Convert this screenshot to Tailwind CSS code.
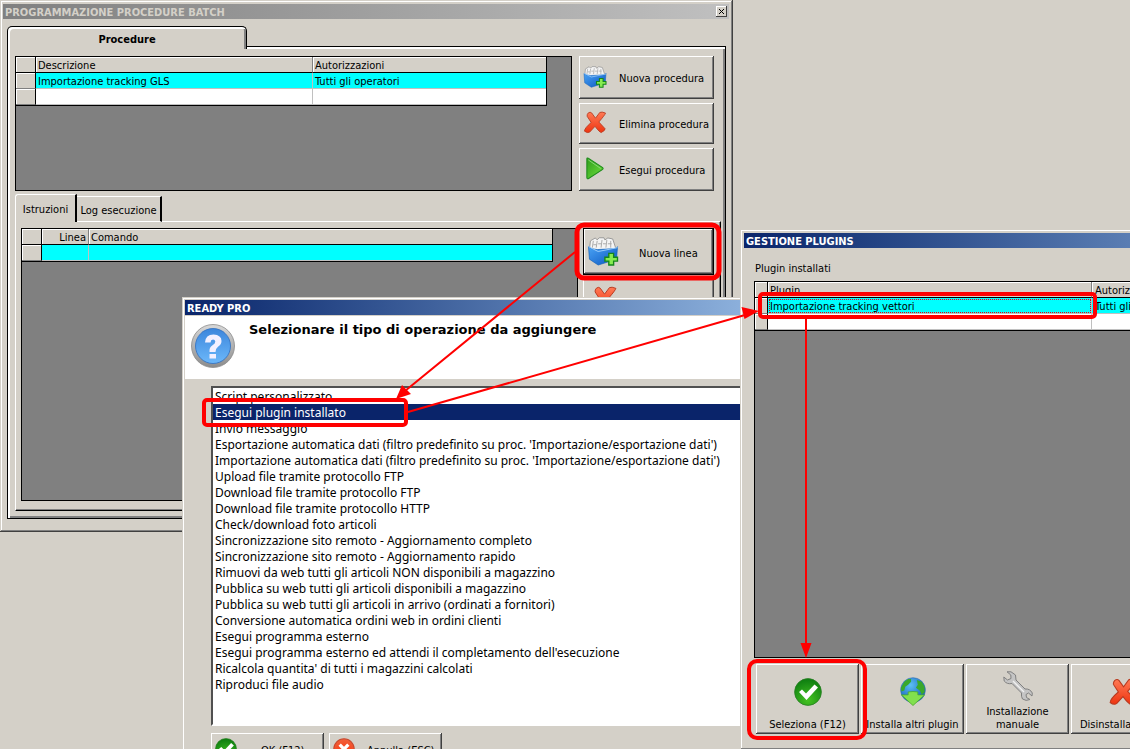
<!DOCTYPE html>
<html lang="it">
<head>
<meta charset="utf-8">
<title>Programmazione procedure batch</title>
<script src="https://cdn.jsdelivr.net/npm/@tailwindcss/browser@4"></script>
</head>
<body>
<main class="relative h-screen w-full overflow-hidden bg-[#d4d0c8] font-['DejaVu_Sans_Condensed','Noto_Sans',sans-serif] text-[11px] leading-[15px] text-black">

<svg class="absolute size-0" aria-hidden="true">
  <defs>
    <linearGradient id="gBlue" x1="0" y1="0" x2="1" y2="1"><stop offset="0" stop-color="#4aa3f5"/><stop offset="1" stop-color="#0a55c0"/></linearGradient>
    <linearGradient id="gRed" x1="0" y1="0" x2="0" y2="1"><stop offset="0" stop-color="#ff7a55"/><stop offset="1" stop-color="#ee3410"/></linearGradient>
    <linearGradient id="gGreen" x1="0" y1="0" x2="1" y2="1"><stop offset="0" stop-color="#2f9e1c"/><stop offset="1" stop-color="#6fe03c"/></linearGradient>
    <linearGradient id="gRing" x1="0" y1="0" x2="0" y2="1"><stop offset="0" stop-color="#d8d8d8"/><stop offset="1" stop-color="#8c8c8c"/></linearGradient>
    <linearGradient id="gAsk" x1="0" y1="0" x2="0" y2="1"><stop offset="0" stop-color="#3c86dc"/><stop offset="1" stop-color="#6cb8fa"/></linearGradient>
    <radialGradient id="gOk" cx=".5" cy=".8" r=".8"><stop offset="0" stop-color="#45c322"/><stop offset="1" stop-color="#0c7c10"/></radialGradient>
    <radialGradient id="gNo" cx=".5" cy=".9" r=".9"><stop offset="0" stop-color="#ff2c00"/><stop offset="1" stop-color="#f0603c"/></radialGradient>
    <radialGradient id="gSea" cx=".4" cy=".3" r=".8"><stop offset="0" stop-color="#5cc0f5"/><stop offset="1" stop-color="#0a50b0"/></radialGradient>
  </defs>
  <symbol id="i-box" viewBox="0 0 32 30">
    <path d="M2 13 3 4 8 1 10 3 12 .8 17 .8 18 3 21 1 26 2 29 11 27 15 4 15Z" fill="#f4f4f4" stroke="#909090" stroke-width=".9"/>
    <path d="M5 11 6 4M9 11 10 4M14 11 15 3M19 11 20 3M24 11 24 4M6 8h3M11 7h3M16 7h3M21 7h4" stroke="#a8a8a8" fill="none"/>
    <path d="M1 10 4 12 10 13 29 12 31 10 30 23 11 29 2 23Z" fill="url(#gBlue)" stroke="#1160b8" stroke-width=".7"/>
    <path d="M1 10 11 15 31 11" fill="none" stroke="#9ccdfb"/>
    <path d="M22 17h5v4h4v4h-4v4h-5v-4h-4v-4h4z" fill="#86ec50" stroke="#15851a" stroke-width="1.400"/>
  </symbol>
  <symbol id="i-x" viewBox="0 0 24 24">
    <path d="M5 2Q7 .5 8.500 2L12.500 7.500 17 1.500Q19 .4 23 2.200 22.500 4 16 11.500L22.500 18.500Q23 20 18.500 22.500 17 22.500 12 16L6.500 22Q4 23.500 1 21 1 18 8 12L3.800 5.500Q3.500 3.500 5 2Z" fill="url(#gRed)" stroke="#b83a20" stroke-width=".9"/>
  </symbol>
  <symbol id="i-play" viewBox="0 0 20 24">
    <path d="M1.500 2Q1.500 .6 3 1.200L18 11Q19 12 18 13L3 22.600Q1.500 23 1.500 21.500Z" fill="url(#gGreen)" stroke="#1e8a1c" stroke-width="1.100"/>
    <path d="M3 3 16 12" stroke="#8ad878" fill="none"/>
  </symbol>
  <symbol id="i-ok" viewBox="0 0 28 28">
    <circle cx="14" cy="14" r="13.400" fill="url(#gOk)" stroke="#2a7f24" stroke-width=".8"/>
    <path d="M5 14 8 11.500 12 15.500 20.500 6.500 24 9.500 12.500 22Z" fill="#fff"/>
  </symbol>
  <symbol id="i-no" viewBox="0 0 28 28">
    <circle cx="14" cy="14" r="13" fill="url(#gNo)" stroke="#c84a30" stroke-width="1.400"/>
    <path d="M7 10 10 7 14 11 18 7 21 10 17 14 21 18 18 21 14 17 10 21 7 18 11 14Z" fill="#fff"/>
  </symbol>
  <symbol id="i-globe" viewBox="0 0 28 30">
    <circle cx="14" cy="13.500" r="12.800" fill="url(#gSea)" stroke="#2a6ab0" stroke-width=".6"/>
    <path d="M5 5 9 2 12 2 12 5 9 8 6 10 5 14 2 15 1.500 11ZM18 3 23 5 26 10 26 16 23 18 21 14 17 11 19 8Z" fill="#3aa82c"/>
    <path d="M9 15.500Q14 14.500 19 15.500L19 18.500 26 18.500 14 29.500 2 18.500 9 18.500Z" fill="#82e04e" stroke="#48a828" stroke-width=".8"/>
  </symbol>
  <symbol id="i-wrench" viewBox="0 0 30 30">
    <path d="M4 .8 8 .8 12.500 4 13 9 22 18Q27 17.500 29.300 22L29 25 25.500 22 23 23.500 23.500 26.500 27 28.500Q23 30.500 19.500 28 18 25.500 18.500 22L9 12.500Q4 13.500 1.200 10L.8 6 4.500 9 8 7.500 7.800 4Z" fill="#c4c4c4" stroke="#808080"/>
    <path d="M10 10 21 21" stroke="#f0f0f0" stroke-width="1.500"/>
  </symbol>
  <symbol id="i-ask" viewBox="0 0 44 44">
    <circle cx="22" cy="22" r="21.500" fill="url(#gRing)" stroke="#8a8a8a" stroke-width=".8"/>
    <circle cx="22" cy="22" r="17.500" fill="url(#gAsk)" stroke="#2f6fc0" stroke-width=".8"/>
    <path d="M14 18.500Q14.500 10.500 22.500 10.500 30.500 11 30.500 17 30.500 20.500 27 22.700 24.500 24.500 24.500 28L18.500 28Q18 23.500 21.500 21.300 24.500 19.500 24.300 17.500 24 15.500 22 15.500 19.700 15.700 19.500 18.500ZM18.500 30H25V34.500H18.500Z" fill="#f3f0ff"/>
  </symbol>
</svg>

<!-- Batch procedure window -->
<section class="absolute left-0 top-0 w-[733px] bg-[#d4d0c8] px-[3px] pt-1 pb-[13px] shadow-[inset_-1px_-1px_#404040,inset_1px_1px_#d4d0c8,inset_-2px_-2px_#808080,inset_2px_2px_#fff]">
  <header class="mr-px flex h-[15px] items-center justify-between bg-linear-to-r from-[#808080] to-[#c0c0c0] px-0.5">
    <h1 class="pt-0.5 font-bold text-[#d4d0c8]">PROGRAMMAZIONE PROCEDURE BATCH</h1>
    <button type="button" aria-label="Chiudi" class="grid size-[11px] place-items-center bg-[#d4d0c8] shadow-[inset_-1px_-1px_#404040,inset_1px_1px_#fff]">
      <svg class="size-[7px]" viewBox="0 0 7 7"><path d="M1 1 6 6M6 1 1 6" stroke="#000"/></svg>
    </button>
  </header>
  <div class="mx-1 mt-[7px]">
    <button type="button" class="relative z-10 -mb-[3px] flex h-[23px] w-60 items-center justify-center rounded-t-[5px] border border-b-0 border-black bg-[#d4d0c8] pt-0.5 font-bold shadow-[inset_2px_2px_#fff,inset_-2px_0_#808080]">Procedure</button>
    <div class="border border-black pt-[9px] pb-[7px] pl-[7px] pr-[3px] shadow-[inset_2px_2px_#fff,inset_-2px_-2px_#808080]">
      <div class="flex gap-[7px] pr-2">
        <div class="h-[135px] flex-1 border border-black bg-[#808080]">
          <table class="w-[531px] table-fixed border-separate border-spacing-0 border-r border-b border-black text-left leading-[13px] [&_td]:pt-0.5 [&_th]:pt-0.5">
            <colgroup><col class="w-5"><col class="w-[277px]"><col></colgroup>
            <thead><tr class="h-4 bg-[#d4d0c8]">
              <th class="border-r border-b border-black p-0 shadow-[inset_1px_1px_#fff]"></th>
              <th class="border-r border-b border-r-[#808080] border-b-black p-0 pl-0.5 font-normal shadow-[inset_1px_1px_#fff]">Descrizione</th>
              <th class="border-b border-black p-0 pl-0.5 font-normal shadow-[inset_1px_1px_#fff]">Autorizzazioni</th>
            </tr></thead>
            <tbody>
              <tr class="h-4 bg-[#00ffff]">
                <td class="border-r border-b border-r-black border-b-[#808080] bg-[#d4d0c8] p-0 shadow-[inset_1px_1px_#fff]"></td>
                <td class="border-r border-b border-[#c0c0c0] p-0 pl-0.5">Importazione tracking GLS</td>
                <td class="border-b border-[#c0c0c0] p-0 pl-0.5">Tutti gli operatori</td>
              </tr>
              <tr class="h-4 bg-white">
                <td class="border-r border-b border-r-black border-b-[#808080] bg-[#d4d0c8] p-0 shadow-[inset_1px_1px_#fff]"></td>
                <td class="border-r border-b border-[#c0c0c0] p-0"></td>
                <td class="border-b border-[#c0c0c0] p-0"></td>
              </tr>
            </tbody>
          </table>
        </div>
        <div class="flex w-[135px] flex-col gap-1">
          <button type="button" class="flex h-[43px] items-center gap-3 pt-0.5 pl-1 shadow-[inset_-1px_-1px_#404040,inset_1px_1px_#fff,inset_-2px_-2px_#808080]"><svg class="mb-1 h-[22px] w-6"><use href="#i-box"/></svg>Nuova procedura</button>
          <button type="button" class="flex h-[41px] items-center gap-3 pt-0.5 pl-1 shadow-[inset_-1px_-1px_#404040,inset_1px_1px_#fff,inset_-2px_-2px_#808080]"><svg class="mb-1 h-[23px] w-6"><use href="#i-x"/></svg>Elimina procedura</button>
          <button type="button" class="flex h-[43px] items-center gap-3 pt-0.5 pl-1 shadow-[inset_-1px_-1px_#404040,inset_1px_1px_#fff,inset_-2px_-2px_#808080]"><svg class="mb-1 h-[23px] w-6"><use href="#i-play"/></svg>Esegui procedura</button>
        </div>
      </div>
      <div class="relative z-10 mt-[3px] -mb-px flex items-end">
        <button type="button" class="flex h-7 w-[62px] items-center justify-center rounded-tl-[3px] border-t border-r-2 border-l border-t-white border-r-black border-l-white bg-[#d4d0c8] pt-0.5">Istruzioni</button>
        <button type="button" class="flex h-[26px] w-[85px] items-center justify-center border-t border-r-2 border-b border-t-white border-r-black border-b-white pt-0.5">Log esecuzione</button>
      </div>
      <div class="mr-px border-t border-r border-b border-l border-t-white border-r-black border-b-black border-l-white pt-[6px] pb-[9px] pl-[5px] shadow-[inset_-1px_-1px_#808080]">
        <div class="flex gap-[5px]">
          <div class="h-[273px] w-[557px] border border-black bg-[#808080]">
            <table class="w-[531px] table-fixed border-separate border-spacing-0 border-r border-b border-black text-left leading-[13px] [&_td]:pt-0.5 [&_th]:pt-0.5">
              <colgroup><col class="w-5"><col class="w-[47px]"><col></colgroup>
              <thead><tr class="h-4 bg-[#d4d0c8]">
                <th class="border-r border-b border-black p-0 shadow-[inset_1px_1px_#fff]"></th>
                <th class="border-r border-b border-r-[#808080] border-b-black p-0 pr-0.5 text-right font-normal shadow-[inset_1px_1px_#fff]">Linea</th>
                <th class="border-b border-black p-0 pl-0.5 font-normal shadow-[inset_1px_1px_#fff]">Comando</th>
              </tr></thead>
              <tbody><tr class="h-4 bg-[#00ffff]">
                <td class="border-r border-b border-r-black border-b-[#808080] bg-[#d4d0c8] p-0 shadow-[inset_1px_1px_#fff]"></td>
                <td class="border-r border-b border-[#c0c0c0] p-0"></td>
                <td class="border-b border-[#c0c0c0] p-0"></td>
              </tr></tbody>
            </table>
          </div>
          <div class="flex w-[131px] flex-col gap-1">
            <button type="button" class="flex h-[47px] items-center gap-5 border border-black pl-[3px] pt-1 shadow-[inset_-1px_-1px_#404040,inset_1px_1px_#fff,inset_-2px_-2px_#808080]"><svg class="mb-1 h-[29px] w-8"><use href="#i-box"/></svg>Nuova linea</button>
            <button type="button" class="flex h-[47px] items-center gap-5 pl-2 shadow-[inset_-1px_-1px_#404040,inset_1px_1px_#fff,inset_-2px_-2px_#808080]"><svg class="mb-2 h-[30px] w-[26px]"><use href="#i-x"/></svg>Elimina linea</button>
          </div>
        </div>
      </div>
    </div>
  </div>
</section>

<!-- Operation type dialog -->
<section class="absolute left-[182px] top-[297px] w-[660px] bg-[#d4d0c8] p-[3px] shadow-[inset_1px_1px_#d4d0c8,inset_2px_2px_#fff]">
  <header class="flex h-[15px] items-center bg-linear-to-r from-[#0a246a] to-[#a6caf0] px-0.5">
    <h2 class="pt-0.5 font-bold text-white">READY PRO</h2>
  </header>
  <div class="mt-px flex h-[63px] gap-3.5 bg-white pl-1.5 pt-2">
    <svg class="size-11"><use href="#i-ask"/></svg>
    <p class="font-['DejaVu_Sans',sans-serif] text-[13px] leading-3 font-bold">Selezionare il tipo di operazione da aggiungere</p>
  </div>
  <div class="mt-[7px] ml-[26px] h-[340px] border-t-2 border-b-2 border-l-2 border-t-[#505050] border-b-white border-l-[#505050] bg-white">
    <ul role="listbox" aria-label="Tipo di operazione" class="font-['Noto_Sans',sans-serif] text-[12px] leading-[14px] *:h-4 *:pt-0.5 *:pl-0.5">
      <li role="option">Script personalizzato</li>
      <li role="option" aria-selected="true" class="bg-[#0a246a] text-white">Esegui plugin installato</li>
      <li role="option">Invio messaggio</li>
      <li role="option">Esportazione automatica dati (filtro predefinito su proc. 'Importazione/esportazione dati')</li>
      <li role="option">Importazione automatica dati (filtro predefinito su proc. 'Importazione/esportazione dati')</li>
      <li role="option">Upload file tramite protocollo FTP</li>
      <li role="option">Download file tramite protocollo FTP</li>
      <li role="option">Download file tramite protocollo HTTP</li>
      <li role="option">Check/download foto articoli</li>
      <li role="option">Sincronizzazione sito remoto - Aggiornamento completo</li>
      <li role="option">Sincronizzazione sito remoto - Aggiornamento rapido</li>
      <li role="option">Rimuovi da web tutti gli articoli NON disponibili a magazzino</li>
      <li role="option">Pubblica su web tutti gli articoli disponibili a magazzino</li>
      <li role="option">Pubblica su web tutti gli articoli in arrivo (ordinati a fornitori)</li>
      <li role="option">Conversione automatica ordini web in ordini clienti</li>
      <li role="option">Esegui programma esterno</li>
      <li role="option">Esegui programma esterno ed attendi il completamento dell'esecuzione</li>
      <li role="option">Ricalcola quantita' di tutti i magazzini calcolati</li>
      <li role="option">Riproduci file audio</li>
    </ul>
  </div>
  <div class="mt-[7px] ml-[26px] flex gap-[5px]">
    <button type="button" class="flex h-[35px] w-[113px] items-center gap-6 pl-1 shadow-[inset_-1px_-1px_#404040,inset_1px_1px_#fff,inset_-2px_-2px_#808080]"><svg class="mb-1 size-[22px]"><use href="#i-ok"/></svg>OK (F12)</button>
    <button type="button" class="flex h-[35px] w-[113px] items-center gap-3 pl-1 shadow-[inset_-1px_-1px_#404040,inset_1px_1px_#fff,inset_-2px_-2px_#808080]"><svg class="mb-1 size-[22px]"><use href="#i-no"/></svg>Annulla (ESC)</button>
  </div>
</section>

<!-- Plugin management window -->
<section class="absolute left-[740px] top-[229px] w-[708px] bg-[#d4d0c8] p-1 pb-4 shadow-[inset_-1px_-1px_#404040,inset_1px_1px_#d4d0c8,inset_-2px_-2px_#808080,inset_2px_2px_#fff]">
  <header class="flex h-[15px] items-center bg-linear-to-r from-[#0a246a] to-[#a6caf0] px-0.5">
    <h2 class="pt-0.5 font-bold text-white">GESTIONE PLUGINS</h2>
  </header>
  <div class="px-2.5">
    <h3 class="mt-[13px] mb-[5px] pl-px">Plugin installati</h3>
    <div class="h-[377px] border border-black bg-[#808080]">
      <table class="w-full table-fixed border-separate border-spacing-0 border-b border-black text-left leading-[13px] [&_td]:pt-0.5 [&_th]:pt-0.5">
        <colgroup><col class="w-[13px]"><col class="w-[324px]"><col></colgroup>
        <thead><tr class="h-4 bg-[#d4d0c8]">
          <th class="border-r border-b border-black p-0 shadow-[inset_1px_1px_#fff]"></th>
          <th class="border-r border-b border-r-[#808080] border-b-black p-0 pl-0.5 font-normal shadow-[inset_1px_1px_#fff]">Plugin</th>
          <th class="border-b border-black p-0 pl-[3px] font-normal shadow-[inset_1px_1px_#fff]">Autorizzazioni</th>
        </tr></thead>
        <tbody>
          <tr class="h-4 bg-[#00ffff]">
            <td class="border-r border-b border-r-black border-b-[#808080] bg-[#d4d0c8] p-0 shadow-[inset_1px_1px_#fff]"></td>
            <td class="border-r border-b border-[#c0c0c0] p-0 pl-0.5 outline-1 -outline-offset-2 outline-dotted outline-red-600">Importazione tracking vettori</td>
            <td class="border-b border-[#c0c0c0] p-0 pl-[3px]">Tutti gli operatori</td>
          </tr>
          <tr class="h-4 bg-white">
            <td class="border-r border-b border-r-black border-b-[#808080] bg-[#d4d0c8] p-0 shadow-[inset_1px_1px_#fff]"></td>
            <td class="border-r border-b border-[#c0c0c0] p-0"></td>
            <td class="border-b border-[#c0c0c0] p-0"></td>
          </tr>
        </tbody>
      </table>
    </div>
    <div class="mt-[6px] ml-0.5 flex gap-0.5">
      <button type="button" class="flex h-[70px] w-[103px] flex-col items-center justify-end gap-[11px] pb-0.5 whitespace-nowrap shadow-[inset_-1px_-1px_#404040,inset_1px_1px_#fff,inset_-2px_-2px_#808080]"><svg class="size-7"><use href="#i-ok"/></svg>Seleziona (F12)</button>
      <button type="button" class="flex h-[70px] w-[103px] flex-col items-center justify-end gap-[11px] pb-0.5 whitespace-nowrap shadow-[inset_-1px_-1px_#404040,inset_1px_1px_#fff,inset_-2px_-2px_#808080]"><svg class="h-[29px] w-7"><use href="#i-globe"/></svg>Installa altri plugin</button>
      <button type="button" class="flex h-[70px] w-[103px] flex-col items-center justify-end gap-1 pb-[3px] leading-[13px] shadow-[inset_-1px_-1px_#404040,inset_1px_1px_#fff,inset_-2px_-2px_#808080]"><svg class="size-[30px]"><use href="#i-wrench"/></svg>Installazione<br>manuale</button>
      <button type="button" class="flex h-[70px] w-[103px] flex-col items-center justify-end gap-[11px] pb-0.5 whitespace-nowrap shadow-[inset_-1px_-1px_#404040,inset_1px_1px_#fff,inset_-2px_-2px_#808080]"><svg class="h-7 w-7"><use href="#i-x"/></svg>Disinstalla plugin</button>
    </div>
  </div>
</section>

<!-- Annotations over the windows -->
<svg class="pointer-events-none absolute left-0 top-0 h-[749px] w-[1130px]" viewBox="0 0 1130 749" fill="none" stroke="#f00" aria-hidden="true">
  <rect x="577" y="225" width="142" height="53" rx="7" stroke-width="5"/>
  <rect x="204" y="400" width="202" height="25" rx="3" stroke-width="4"/>
  <rect x="760" y="294" width="335" height="23" rx="3" stroke-width="4"/>
  <rect x="749" y="661" width="116" height="77" rx="8" stroke-width="4"/>
  <path d="M575 252 405 391M408 412 745 315M806 319V645" stroke-width="2"/>
  <path d="M396 399 402 385 411 394ZM759 311 741.500 307 744.500 319ZM806 658 800.500 643H811.500Z" fill="#f00" stroke="none"/>
</svg>
</main>
</body>
</html>
